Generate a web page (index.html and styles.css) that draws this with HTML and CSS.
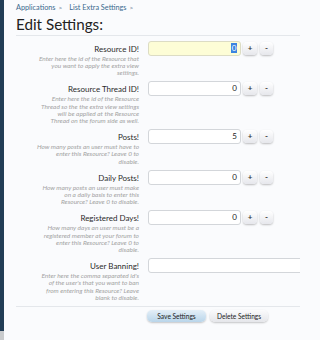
FILE: index.html
```html
<!DOCTYPE html>
<html>
<head>
<meta charset="utf-8">
<link rel="stylesheet" href="styles.css">
</head>
<body>
<div class="page">
  <div class="side">
    <div class="side-dark"></div>
    <div class="side-foot"></div>
  </div>
  <div class="main">
    <div class="crumbs">
      <span class="crumb">Applications</span><span class="sep">&gt;</span>
      <span class="crumb">List Extra Settings</span><span class="sep">&gt;</span>
    </div>
    <h1 class="title">Edit Settings:</h1>
    <div class="form">
      <div class="row">
        <div class="dt">
          <div class="label">Resource ID!</div>
          <div class="explain">Enter here the id of the Resource that<br>you want to apply the extra view<br>settings.</div>
        </div>
        <div class="dd">
          <div class="field focused"><span class="sel">0</span></div>
          <div class="spin">+</div>
          <div class="spin">-</div>
        </div>
      </div>
      <div class="row">
        <div class="dt">
          <div class="label">Resource Thread ID!</div>
          <div class="explain">Enter here the id of the Resource<br>Thread so the the extra view settings<br>will be applied at the Resource<br>Thread on the forum side as well.</div>
        </div>
        <div class="dd">
          <div class="field">0</div>
          <div class="spin">+</div>
          <div class="spin">-</div>
        </div>
      </div>
      <div class="row">
        <div class="dt">
          <div class="label">Posts!</div>
          <div class="explain">How many posts an user must have to<br>enter this Resource? Leave 0 to<br>disable.</div>
        </div>
        <div class="dd">
          <div class="field">5</div>
          <div class="spin">+</div>
          <div class="spin">-</div>
        </div>
      </div>
      <div class="row">
        <div class="dt">
          <div class="label">Daily Posts!</div>
          <div class="explain">How many posts an user must make<br>on a daily basis to enter this<br>Resource? Leave 0 to disable.</div>
        </div>
        <div class="dd">
          <div class="field">0</div>
          <div class="spin">+</div>
          <div class="spin">-</div>
        </div>
      </div>
      <div class="row">
        <div class="dt">
          <div class="label">Registered Days!</div>
          <div class="explain">How many days an user must be a<br>registered member at your forum to<br>enter this Resource? Leave 0 to<br>disable.</div>
        </div>
        <div class="dd">
          <div class="field">0</div>
          <div class="spin">+</div>
          <div class="spin">-</div>
        </div>
      </div>
      <div class="row">
        <div class="dt">
          <div class="label">User Banning!</div>
          <div class="explain">Enter here the comma separated id's<br>of the user's that you want to ban<br>from entering this Resource? Leave<br>blank to disable.</div>
        </div>
        <div class="dd wide">
          <div class="field text"></div>
        </div>
      </div>
    </div>
    <div class="actions">
      <div class="btn primary">Save Settings</div>
      <div class="btn">Delete Settings</div>
    </div>
  </div>
</div>
</body>
</html>
```
FILE: styles.css
```css
html, body {
  margin: 0;
  padding: 0;
  width: 300px;
  height: 340px;
  overflow: hidden;
  background: #fafbfd;
  font-family: Lato, "Liberation Sans", sans-serif;
  color: #222;
}
.page {
  display: flex;
  height: 340px;
}
.side {
  width: 4px;
  display: flex;
  flex-direction: column;
  flex: none;
}
.side-dark {
  flex: 1;
  background: #223d56;
}
.side-foot {
  height: 9px;
  background: #c9cbcd;
}
.main {
  flex: 1;
  min-width: 0;
  padding-left: 12px;
}
.crumbs {
  padding-top: 2px;
  height: 12px;
  font-size: 7.3px;
  line-height: 12px;
  white-space: nowrap;
}
.crumb { color: #3a6a8e; }
.sep {
  margin-left: 3px;
  margin-right: 5px;
  font-size: 6.5px;
  color: #5d7890;
}
.title {
  margin: 0;
  font-size: 15.2px;
  font-weight: normal;
  line-height: 20px;
  height: 21px;
  border-bottom: 1px solid #e4e7eb;
  color: #222;
}
.form {
  padding-top: 4.7px;
  border-bottom: 1px solid #e4e7eb;
}
.row {
  display: flex;
  padding-bottom: 4.5px;
}
.dt {
  width: 123px;
  flex: none;
  text-align: right;
}
.label {
  margin-top: 2px;
  font-size: 8px;
  line-height: 12px;
  color: #2a2a2a;
}
.explain {
  font-size: 6.5px;
  line-height: 7.35px;
  font-style: italic;
  color: #a3a3a3;
  white-space: nowrap;
}
.dd {
  margin-left: 9px;
  display: flex;
  align-items: flex-start;
  gap: 2px;
}
.dd.wide {
  flex: 1;
}
.field {
  box-sizing: border-box;
  width: 93px;
  height: 15px;
  border: 1px solid #d3d6da;
  border-radius: 3px;
  background: #fff;
  font-size: 8px;
  line-height: 13px;
  text-align: right;
  padding-right: 3px;
  color: #222;
}
.field.focused {
  background: #fdfdd6;
  border-color: #dcdcc4;
}
.field.text {
  width: auto;
  flex: 1;
  margin-right: -20px;
}
.sel {
  display: inline-block;
  background: #3b84e0;
  color: #fff;
  line-height: 10px;
  padding: 0 0.5px;
}
.spin {
  box-sizing: border-box;
  width: 14px;
  height: 13px;
  margin-top: 1px;
  border-radius: 4px;
  background: linear-gradient(#ffffff, #e6e7ec);
  box-shadow: 0 1px 2px rgba(0, 0, 0, 0.25);
  font-size: 8px;
  font-weight: bold;
  line-height: 13px;
  text-align: center;
  color: #333;
}
.spin + .spin {
  margin-left: 1px;
  width: 13px;
}
.actions {
  display: flex;
  gap: 4px;
  padding-top: 3px;
  padding-left: 131px;
}
.btn {
  height: 12px;
  padding: 0 7px;
  border-radius: 5px;
  background: linear-gradient(#fbfbfc, #e5e6ea);
  box-shadow: 0 1px 2px rgba(0, 0, 0, 0.22);
  font-size: 6.6px;
  line-height: 12px;
  color: #222;
  white-space: nowrap;
}
.btn.primary {
  box-sizing: border-box;
  width: 59px;
  text-align: center;
  background: linear-gradient(#e4eff8, #b9d5ea);
}
```
